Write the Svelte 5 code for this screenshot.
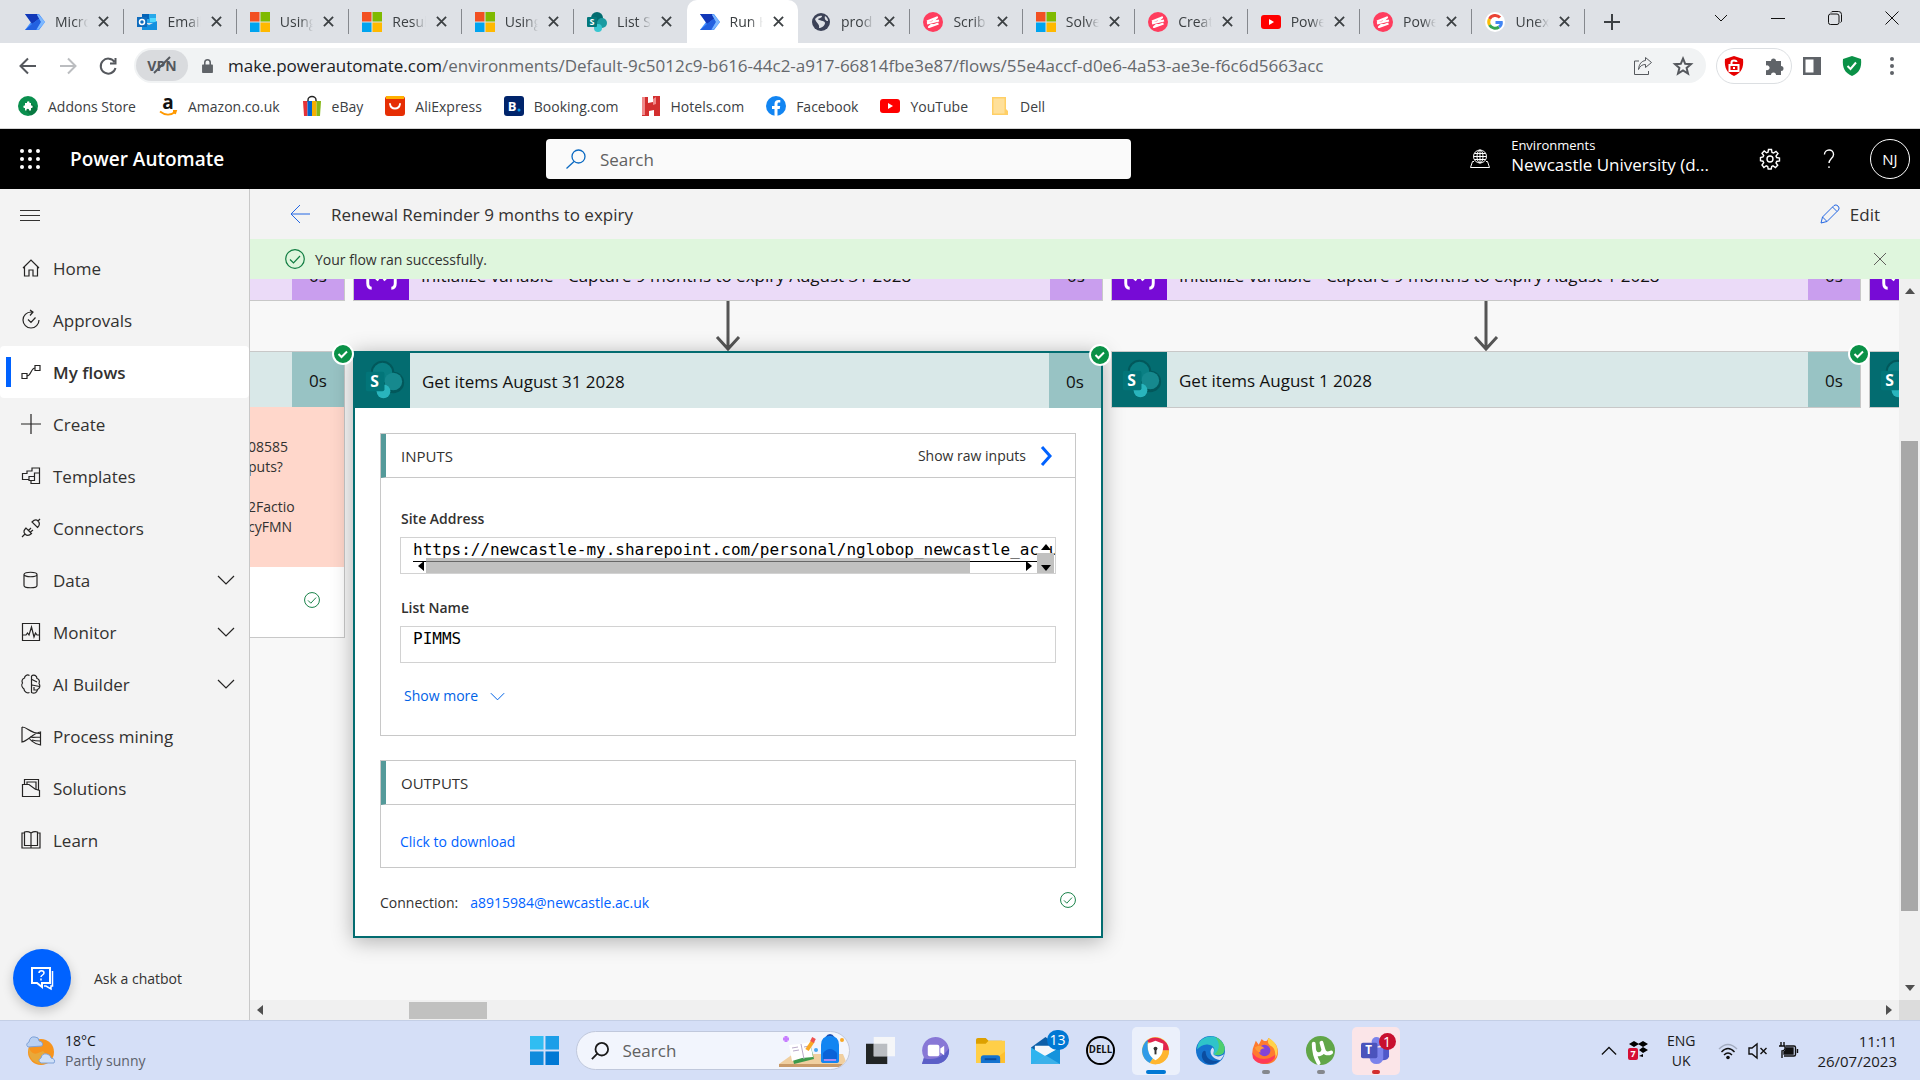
<script lang="ts">
	const tabs = [
		{ icon: 'flow', title: 'Micro' },
		{ icon: 'outlook', title: 'Email' },
		{ icon: 'microsoft', title: 'Using' },
		{ icon: 'microsoft', title: 'Resul' },
		{ icon: 'microsoft', title: 'Using' },
		{ icon: 'sharepoint', title: 'List S', plain: true },
		{ icon: 'flow', title: 'Run H', active: true },
		{ icon: 'globe', title: 'prod' },
		{ icon: 'scribe', title: 'Scrib' },
		{ icon: 'microsoft', title: 'Solve' },
		{ icon: 'scribe', title: 'Creat' },
		{ icon: 'youtube', title: 'Powe' },
		{ icon: 'scribe', title: 'Powe' },
		{ icon: 'google', title: 'Unex' }
	];

	const bookmarks = [
		{ icon: 'addons', title: 'Addons Store' },
		{ icon: 'amazon', title: 'Amazon.co.uk' },
		{ icon: 'ebay', title: 'eBay' },
		{ icon: 'ali', title: 'AliExpress' },
		{ icon: 'booking', title: 'Booking.com' },
		{ icon: 'hotels', title: 'Hotels.com' },
		{ icon: 'facebook', title: 'Facebook' },
		{ icon: 'youtube', title: 'YouTube' },
		{ icon: 'folder', title: 'Dell' }
	];

	const nav = [
		{ label: 'Home', d: 'M2 10 10 2l8 8M3.500 9v9h4.500v-6h4v6h4.500V9' },
		{ label: 'Approvals', d: 'M18 10a8 8 0 1 1-8-8h2M9 0l3 2-3 3.500M7 9.500l3 3 4.500-5' },
		{ label: 'My flows', d: 'M1 11.500h5v5H1zM14 3.500h5v5h-5zM6 14c4 0 4-8 8-8', active: true },
		{ label: 'Create', d: 'M10 0v20M0 10h20' },
		{ label: 'Templates', d: 'M8 13.500H1.500v-6H6V5h5V2h7.500v5M10 17.500v-3H8v-4h5.500V7h5v10.500zM10 14.500h3.500v-4' },
		{ label: 'Connectors', d: 'M1 19l3-3M4 16c-2-2-1-4 1-6l5.500 5.500c-2 2-4.500 2.500-6.500.5zM7.500 12.500 10 10M9.500 14 12 12M19 1l-2 2M17 3c2 2 1.500 4.500-.5 6.500L11 4c2-2 4-3 6-1z' },
		{ label: 'Data', d: 'M3 4.500C3 1.500 16 1.500 16 4.500S3 7.500 3 4.500v11c0 3 13 3 13 0v-11', more: true },
		{ label: 'Monitor', d: 'M1.500 1.500h17v17h-17zM2 13h3l1.500-2L8 13l2.500-8L13 15l1.500-4 1.500 2h3', more: true },
		{ label: 'AI Builder', d: 'M8.500 1.500C6 0 3.500 2 3.500 4 1 5 .5 7 1.500 9c-1.500 2-.5 4.500 1.500 6 0 3 3.500 4.500 5.500 3.500M10.500 2v16.500c3 1.500 5.500 0 6-3 2.500-1 3-4 1.500-6 1-2.500 0-4.500-2-5 0-3-3.500-4.500-5.500-2.500M11 5.500l5 2.500M11 11l7.500 1.500M13 13v3h4', more: true },
		{ label: 'Process mining', d: 'M1 1v15c6-1 11-9 18.500-10v13C12 18 8 12 8 12M1 1c6 0 7 6 18 6.500M9 11c3 1 6 0 10.500 0M11 14c3 1 5 1 8.500 1' },
		{ label: 'Solutions', d: 'M1.500 6.500v12h17v-6L14 11 8 6.500zM3.500 6V1.500h14v11M6 6V4h9v8' },
		{ label: 'Learn', d: 'M3.500 3H1v15h18V3h-2.500M3.500 2c3-1 5 0 6.500 1 1.500-1 3.500-2 6.500-1v13.500H3.500zM10 3v14.500' }
	];

	const columns = [
		{ variable: '', action: '' },
		{
			variable: 'Initialize variable - Capture 9 months to expiry August 31 2028',
			action: 'Get items August 31 2028',
			open: true
		},
		{
			variable: 'Initialize variable - Capture 9 months to expiry August 1 2028',
			action: 'Get items August 1 2028'
		},
		{ variable: '', action: '' }
	];

	const apps = [
		{ icon: 'taskview' },
		{ icon: 'chat' },
		{ icon: 'explorer' },
		{ icon: 'mail', badge: '13' },
		{ icon: 'dell' },
		{ icon: 'browser', state: 'current' },
		{ icon: 'edge' },
		{ icon: 'firefox', state: 'running' },
		{ icon: 'utorrent', state: 'running' },
		{ icon: 'teams', state: 'alert', badge: '1' }
	];
</script>

{#snippet siteIcon(name)}
	<svg class="site-icon" viewBox="0 0 20 20" aria-hidden="true">
		{#if name === 'flow'}
			<path fill="#3f8cff" d="M0 2h14l6 8-6 8H0l6-8z" />
			<path fill="#1238b8" d="M0 2h12l3 4-8 6z" />
			<path fill="#2361e0" d="M7 12 15 6l1 4-5 8H0z" />
			<path fill="#7db8ff" d="m13 2 7 8-7 8-1-1 4-7-4-7z" />
		{:else if name === 'outlook'}
			<path fill="#28a8ea" d="M5 2h14v9H5z" />
			<path fill="#0364b8" d="M5 2h7v5H5z" />
			<path fill="#50d9ff" d="M13 6h6v4h-6z" />
			<path fill="#1490df" d="m5 9 7 4 8-4v9H5z" />
			<path fill="#0f6cbd" d="M0 5h10v10H0z" />
			<circle cx="5" cy="10" r="2.500" fill="none" stroke="#fff" stroke-width="1.500" />
		{:else if name === 'microsoft'}
			<path fill="#f25022" d="M0 0h9.500v9.500H0z" />
			<path fill="#7fba00" d="M10.500 0H20v9.500h-9.500z" />
			<path fill="#00a4ef" d="M0 10.500h9.500V20H0z" />
			<path fill="#ffb900" d="M10.500 10.500H20V20h-9.500z" />
		{:else if name === 'sharepoint'}
			<circle cx="10" cy="6" r="6" fill="#036c70" />
			<circle cx="15" cy="11" r="5" fill="#1a9ba1" />
			<circle cx="11" cy="16" r="4" fill="#37c6d0" />
			<rect y="5" width="10" height="10" rx="1" fill="#03787c" />
			<text x="5" y="13" text-anchor="middle" class="mark small">S</text>
		{:else if name === 'globe'}
			<circle cx="10" cy="10" r="9" fill="#3c4257" />
			<path fill="#dee1e6" d="M4 7c2-3 6-4 7-3 0 2-3 2-4 3 0 2 7 1 7 4s-4 5-6 5c1-4-3-5-4-9zM14 4c2 1 3 3 3 5-2 0-4-2-3-5z" />
		{:else if name === 'scribe'}
			<circle cx="10" cy="10" r="10" fill="#ff3d5e" />
			<path fill="none" stroke="#fff" stroke-width="2.200" stroke-linejoin="round" d="M4 9.500 14 5.500 10 9M4 11.500 16 8.500M10 11.500 6 15l9.500-3.500" />
		{:else if name === 'youtube'}
			<rect y="3" width="20" height="14" rx="3" fill="#f00" />
			<path fill="#fff" d="m8 7 5 3-5 3z" />
		{:else if name === 'google'}
			<circle cx="10" cy="10" r="10" fill="#fff" />
			<g fill="none" stroke-width="3">
				<path stroke="#ea4335" d="M15 5.500A6.500 6.500 0 0 0 4.500 7" />
				<path stroke="#fbbc05" d="M4.500 7a6.500 6.500 0 0 0 0 6" />
				<path stroke="#34a853" d="M4.500 13a6.500 6.500 0 0 0 9.500 2" />
				<path stroke="#4285f4" d="M14 15c1.500-1 2.500-3 2.300-4.500H10.500" />
			</g>
		{:else if name === 'addons'}
			<circle cx="10" cy="10" r="10" fill="#0a8f4e" />
			<path fill="#066b39" d="m7 14 6-7 6.500 6A10 10 0 0 1 13 19.500z" opacity=".6" />
			<path fill="#fff" d="M7 7h2a1.300 1.300 0 1 1 2.500 0H13v2.500a1.300 1.300 0 1 1 0 2.500v2.500h-2a1.300 1.300 0 1 0-2.500 0H7V12a1.300 1.300 0 1 1 0-2.500z" />
		{:else if name === 'amazon'}
			<text x="10" y="13" text-anchor="middle" class="mark dark" font-size="19">a</text>
			<path fill="none" stroke="#f90" stroke-width="1.800" d="M2 15.500c5 4 11 4 15 .5M15 15h3l-1 3" />
		{:else if name === 'ebay'}
			<path fill="none" stroke="#222" stroke-width="1.400" d="M6 6V4a4 3.500 0 0 1 8 0v2" />
			<path fill="#e53238" d="M1 5h4.500v15H2z" />
			<path fill="#0064d2" d="M5.500 5H10v15H5.500z" />
			<path fill="#f5af02" d="M10 5h4.500v15H10z" />
			<path fill="#86b817" d="M14.500 5H19l-1 15h-3.500z" />
		{:else if name === 'ali'}
			<rect width="20" height="20" rx="3" fill="#e62e04" />
			<path fill="#ffb000" d="M1 0h18v3H1z" />
			<path fill="none" stroke="#fff" stroke-width="1.800" stroke-linecap="round" d="M5 8c1 6 9 6 10 0" />
		{:else if name === 'booking'}
			<rect width="20" height="20" rx="3" fill="#00246b" />
			<text x="8" y="15" text-anchor="middle" class="mark" font-size="13">B</text>
			<circle cx="15" cy="14" r="1.500" fill="#0a9ae8" />
		{:else if name === 'hotels'}
			<path fill="#d32f2f" d="M1 1h6v6l5-1V0h7v20h-6v-6l-5 1v5H1z" />
			<path fill="#f08a8a" d="M1 1h3v18H1zM12 3l3-2v7l-3 1z" />
		{:else if name === 'facebook'}
			<circle cx="10" cy="10" r="10" fill="#1285f2" />
			<path fill="#fff" d="M8.500 20v-7H6v-3h2.500V8c0-2.500 1.500-4 4-4h1.800v2.500H13c-1.200 0-1.500.700-1.500 1.500v2h2.700l-.500 3h-2.200v7z" />
		{:else if name === 'folder'}
			<path fill="#ffcf66" d="M2 1h14v12l2 2v4H2z" />
			<path fill="#ffe09a" d="M3.500 2.500h11v15h-11z" />
		{/if}
	</svg>
{/snippet}

{#snippet appIcon(name)}
	<svg class="app-icon" viewBox="0 0 30 30" aria-hidden="true">
		{#if name === 'taskview'}
			<path fill="#222525" d="M0 8h22v21H0z" />
			<path fill="#f5f6f8" d="M8 1h22v20H8z" />
			<path fill="#babdc2" d="M8 8h14v13H8z" />
		{:else if name === 'chat'}
			<path fill="#8878d6" d="M15 1a14 14 0 0 1 0 28H1l2-7A14 14 0 0 1 15 1z" />
			<path fill="#5b5fc7" d="M29 13A14 14 0 0 1 15 29H1l2-6c12 3 20-2 26-10z" />
			<rect x="7" y="9" width="12" height="12" rx="2" fill="#fff" />
			<path fill="#fff" d="m20 13 4-3v10l-4-3z" />
		{:else if name === 'explorer'}
			<path fill="#dda000" d="M0 4q0-2 2-2h8l3 3h14v7H0z" />
			<path fill="#ffcf48" d="M0 8h10l3-3h17v23H0z" />
			<path fill="#ffc02e" d="m14 28 16-12v12z" />
			<path fill="#1473cf" d="M5 28v-5q0-3 3-3h14q3 0 3 3v5z" />
			<path stroke="#0a4c9c" stroke-width="2" d="M9 24h12" />
		{:else if name === 'mail'}
			<path fill="#0d5fa8" d="M0 12 15 1l15 11v6H0z" />
			<path fill="#f4f7fb" d="M4 10h22v5l-11 9L4 15z" />
			<path fill="#2fb4ef" d="m0 12 15 9 15-9v17H0z" />
			<path fill="#1593dc" d="M0 29 30 12v17z" />
			<path fill="#5ccaf5" d="m0 29 15-9 15 9z" opacity=".55" />
		{:else if name === 'dell'}
			<circle cx="15" cy="15" r="14" fill="none" stroke="#000" stroke-width="2" />
			<text x="15" y="18" text-anchor="middle" class="mark dark" font-size="10">DELL</text>
		{:else if name === 'browser'}
			<circle cx="15" cy="15" r="14" fill="#fbd44c" />
			<path fill="#e2244f" d="M5 6a14 14 0 0 1 24 9h-8L15 8z" />
			<path fill="#2f9be8" d="M7 4a14 14 0 0 0 2 24l4-6-6-8z" />
			<path fill="#ffb52e" d="M29 15a14 14 0 0 1-20 13l5-6 7-7z" />
			<path fill="#fff" d="m15 5 8 3c0 8-1 13-8 17-7-4-8-9-8-17z" />
			<circle cx="15" cy="13" r="2" fill="#333" />
			<path stroke="#333" stroke-width="2" d="M15 13v6" />
		{:else if name === 'edge'}
			<circle cx="15" cy="15" r="15" fill="#1573cf" />
			<path fill="#2fc4c9" d="M2 9C6-1 22-3 28 8c4 8-1 12-6 12-3 0-5-1-4-3 3-4-1-8-5-8C8 8 4 11 1 14z" />
			<path fill="#4ecf6e" d="M20 1c9 4 12 12 8 17-3 2-7 2-9 1 6-5 6-12 1-18z" />
			<path fill="#d6dff6" d="M17 12c4 3-1 6 2 8 3 2 7 1 10-1-1 3-2 4-4 6-8-1-13-8-8-13z" />
			<path fill="#0b4da0" d="M10 16c0 8 7 11 15 9-7 6-17 6-19-4 0-4 2-7 4-5z" />
		{:else if name === 'firefox'}
			<path fill="#ff7a2d" d="M3 10 5 5l3 4 3-6c4 4 6 2 7-1 4 2 6 6 7 6 4 5 4 14-1 18-6 5-17 4-21-4-2-4-2-8 0-12z" />
			<path fill="#ff3b57" d="M1 16c3 8 15 11 25 3-3 11-18 13-24 4z" />
			<path fill="#ffd24a" d="M18 2c9 4 12 14 7 21 1-6-1-12-5-13-3-2-3-5-2-8z" />
			<circle cx="14" cy="15" r="6" fill="#8344d8" />
			<path fill="#ff9a37" d="M4 12c4-3 7-2 10 1-4 0-5 2-4 4-3 0-5-2-6-5z" />
		{:else if name === 'utorrent'}
			<circle cx="15" cy="15" r="15" fill="#61a648" />
			<path fill="none" stroke="#fff" stroke-width="4" stroke-linecap="round" d="M8 8c0 7 1 13 5 20M9 16c2 5 9 3 9-2l-2-7M18 14c1 4 4 5 8 3" />
		{:else if name === 'teams'}
			<circle cx="16" cy="6" r="5" fill="#7b83eb" />
			<circle cx="25" cy="8" r="4" fill="#5059c9" />
			<path fill="#5059c9" d="M20 12h9v9q-1 5-9 4z" />
			<path fill="#7b83eb" d="M9 12h14v11q-1 6-7 6t-7-6z" />
			<rect y="7" width="17" height="16" rx="2" fill="#4b53bc" />
			<text x="8" y="19" text-anchor="middle" class="mark" font-size="12">T</text>
		{/if}
	</svg>
{/snippet}

{#snippet sharePoint()}
	<svg class="card-icon" viewBox="0 0 56 56" aria-hidden="true">
		<path fill="#036c70" d="M0 0h56v56H0z" />
		<circle cx="28" cy="20" r="12" fill="#02585b" />
		<circle cx="39" cy="30" r="11" fill="#02585b" />
		<circle cx="28" cy="20" r="10" fill="#0a7f83" />
		<circle cx="39" cy="29" r="9" fill="#16898e" />
		<circle cx="29" cy="39" r="7" fill="#29b5bd" />
		<rect x="11" y="19" width="19" height="20" rx="2" fill="#027579" />
		<text x="20" y="35" text-anchor="middle" class="mark" font-size="16">S</text>
	</svg>
{/snippet}

{#snippet braces()}
	<svg class="card-icon" viewBox="0 0 56 56" aria-hidden="true">
		<path fill="#770bd6" d="M0 0h56v56H0z" />
		<path fill="none" stroke="#fff" stroke-width="3" d="M18 14q-4 0-4 5v5q0 4-3 4 3 0 3 4v5q0 5 4 5M38 14q4 0 4 5v5q0 4 3 4-3 0-3 4v5q0 5-4 5M23 21l9 13M32 21l-9 13" />
	</svg>
{/snippet}

{#snippet tick(size)}
	<svg class="tick {size}" viewBox="0 0 20 20" aria-hidden="true">
		<circle cx="10" cy="10" r="9.300" />
		<path d="m5 10.500 3.500 3.500L15 7" />
	</svg>
{/snippet}

{#snippet chevron()}
	<svg class="chevron" viewBox="0 0 18 18" aria-hidden="true"><path d="m1 5 8 8 8-8" /></svg>
{/snippet}

<div class="screen">
	<div class="tab-strip">
		<div class="tabs">
			{#each tabs as tab}
				<div class="tab" class:active={tab.active} class:plain={tab.plain}>
					{@render siteIcon(tab.icon)}
					<span class="tab-title">{tab.title}</span>
					<button class="tab-close" aria-label="Close tab">
						<svg viewBox="0 0 12 12"><path d="m1 1 10 10M11 1 1 11" /></svg>
					</button>
				</div>
			{/each}
		</div>
		<button class="new-tab" aria-label="New tab"><svg viewBox="0 0 16 16"><path d="M8 0v16M0 8h16" /></svg></button>
		<div class="window-controls">
			<button aria-label="Search tabs"><svg viewBox="0 0 14 14"><path d="m1 4 6 6 6-6" /></svg></button>
			<button aria-label="Minimise"><svg viewBox="0 0 14 14"><path d="M0 7.500h14" /></svg></button>
			<button aria-label="Restore"><svg viewBox="0 0 14 14"><rect x=".5" y="3" width="10.500" height="10.500" rx="2" /><path d="M3 1.500Q3.500.5 5 .5h5.500q3 0 3 3V10q0 1-1 1.500" /></svg></button>
			<button aria-label="Close window"><svg viewBox="0 0 14 14"><path d="m.5.5 13 13M13.500.5l-13 13" /></svg></button>
		</div>
	</div>

	<div class="toolbar">
		<button aria-label="Back"><svg viewBox="0 0 20 20"><path d="M18 10H3M10 2.500 2.500 10l7.500 7.500" /></svg></button>
		<button class="faded" aria-label="Forward"><svg viewBox="0 0 20 20"><path d="M2 10h15M10 2.500l7.500 7.500-7.500 7.500" /></svg></button>
		<button aria-label="Reload"><svg viewBox="0 0 20 20"><path d="M16.500 6A7.500 7.500 0 1 0 17.500 12M17.500 2v5.500H12" /></svg></button>
		<div class="address">
			<button class="vpn">VPN<svg viewBox="0 0 34 20" aria-hidden="true"><path d="m9 18 16-16" /></svg></button>
			<svg class="lock" viewBox="0 0 14 18" aria-hidden="true"><path fill="#5f6368" d="M1 7h12q1 0 1 1v9q0 1-1 1H1q-1 0-1-1V8q0-1 1-1z" /><path fill="none" stroke="#5f6368" stroke-width="2" d="M3.500 8V4.500a3.500 3.500 0 0 1 7 0V8" /></svg>
			<span class="url"><b>make.powerautomate.com</b>/environments/Default-9c5012c9-b616-44c2-a917-66814fbe3e87/flows/55e4accf-d0e6-4a53-ae3e-f6c6d5663acc</span>
			<button aria-label="Share"><svg viewBox="0 0 20 20"><path d="M6 5H1.500v13.500h14V15M12.500 1.500l6 5-6 5V8.500C9 8.500 7 10 5.500 13.500 6 8 8.500 5 12.500 4.500z" /></svg></button>
			<button aria-label="Bookmark"><svg viewBox="0 0 20 20"><path stroke-width="2" d="m10 2.500 2.200 5.300 5.800.400-4.400 3.700 1.400 5.600-5-3.100-5 3.100 1.400-5.600L2 8.200l5.800-.400z" /></svg></button>
		</div>
		<div class="extensions">
			<button aria-label="Lock extension"><svg viewBox="0 0 20 20"><path class="solid" fill="#e60000" d="m10 0 9 3c1 9-2 14-9 17C3 17 0 12 1 3z" /><path stroke="#fff" d="M5.500 9h9v6h-9zM7.500 9V6.500q0-2 2.500-2t2.500 1.500M10 11v2" /></svg></button>
			<button aria-label="Extensions"><svg viewBox="0 0 20 20"><path class="solid" fill="#5f6368" d="M2 5h5a2.500 2.500 0 1 1 5 0h5v5a2.500 2.500 0 1 1 0 5v4h-5a2.500 2.500 0 1 0-5 0H2v-5a2.500 2.500 0 1 0 0-4.500z" /></svg></button>
		</div>
		<button aria-label="Side panel"><svg viewBox="0 0 20 20"><path class="solid" fill="#5f6368" d="M1 1h18v18H1z" /><path class="solid" fill="#fff" d="M3.500 3.500h8v13h-8z" /></svg></button>
		<button aria-label="Protection"><svg viewBox="0 0 20 20"><path class="solid" fill="#0a9147" d="m10 0 9 3c1 9-2 14-9 17C3 17 0 12 1 3z" /><path stroke="#fff" stroke-width="2" d="m5.500 10 3 3L14 6.500" /></svg></button>
		<button aria-label="Menu"><svg viewBox="0 0 20 20"><g fill="#5f6368" stroke="none"><circle cx="10" cy="3" r="2" /><circle cx="10" cy="10" r="2" /><circle cx="10" cy="17" r="2" /></g></svg></button>
	</div>

	<div class="bookmarks">
		{#each bookmarks as bookmark}
			<a href="#{bookmark.icon}">{@render siteIcon(bookmark.icon)}{bookmark.title}</a>
		{/each}
	</div>

	<header class="app-bar">
		<div class="brand">
			<button aria-label="App launcher">
				<svg viewBox="0 0 20 20">
					{#each [2, 10, 18] as y}
						{#each [2, 10, 18] as x}<circle cx={x} cy={y} r="2" />{/each}
					{/each}
				</svg>
			</button>
			<strong>Power Automate</strong>
		</div>
		<label class="app-search">
			<svg viewBox="0 0 20 20" aria-hidden="true"><circle cx="12.500" cy="7.500" r="6.500" /><path d="M8 12.500.5 19.500" /></svg>
			<input type="text" placeholder="Search" />
		</label>
		<div class="app-tools">
			<svg class="env-icon" viewBox="0 0 20 20" aria-hidden="true"><circle cx="10" cy="7.500" r="6.500" /><ellipse cx="10" cy="7.500" rx="3" ry="6.500" /><path d="M3.500 7.500h13M4.500 4.500h11M4.500 10.500h11M10 1v13M4 12.500H2.500l-2 6h19l-2-6H16" /></svg>
			<div class="environment"><span>Environments</span><span class="env-name">Newcastle University (d...</span></div>
			<button class="settings" aria-label="Settings">
				<svg viewBox="0 0 20 20"><circle cx="10" cy="10" r="3" /><path d="M8.500.5h3l.5 3 1.500.5L16 2.300 18 4.500 16 7l.700 1.500 2.800.5v3l-2.800.5-.700 1.500 1.700 2.300-2.200 2.200-2.500-1.700-1.300.700-.500 2.500h-3l-.500-2.500-1.500-.700-2.300 1.700L2 16l1.700-2.300-.700-1.500-2.500-.500V8.500L3 8l.700-1.500L2 4.200 4.200 2l2.300 1.800L8 3.200z" /></svg>
			</button>
			<button class="help" aria-label="Help"><svg viewBox="0 0 14 22"><path d="M2 6c0-6 10-7 10 0 0 4-5 5-5 9.500M7 19v2" /></svg></button>
			<button class="avatar">NJ</button>
		</div>
	</header>

	<div class="workspace">
		<nav>
			<button class="menu" aria-label="Collapse menu"><svg viewBox="0 0 20 20"><path d="M0 4.500h20M0 9.500h20M0 14.500h20" /></svg></button>
			{#each nav as item}
				<a href="#{item.label}" class:active={item.active}>
					<svg class="nav-icon" viewBox="0 0 20 20" aria-hidden="true"><path d={item.d} /></svg>
					<span>{item.label}</span>
					{#if item.more}{@render chevron()}{/if}
				</a>
			{/each}
			<div class="chatbot">
				<button aria-label="Ask a chatbot"><svg viewBox="0 0 24 24"><path stroke-width="2" d="M2 2h18v15h-8v4l-5-4H2z" /><path d="M22.500 5v15H21v3l-5-3h-2M9 7c0-3 5-3 5 0 0 2-3 2-3 4M11 12.500v2" /></svg></button>
				<span>Ask a chatbot</span>
			</div>
		</nav>

		<main>
			<div class="flow-bar">
				<button class="back" aria-label="Back to flow"><svg viewBox="0 0 20 20"><path d="M20 10H1M10 1l-9 9 9 9" /></svg></button>
				<h1>Renewal Reminder 9 months to expiry</h1>
				<button class="edit"><svg viewBox="0 0 20 20" aria-hidden="true"><path d="m1 19 1.500-6L14 1.500q2-1.500 4 .5t.5 4L7 17.500zM12.500 3l4.500 4.500M2.500 13 7 17.500" /></svg>Edit</button>
			</div>
			<div class="notice">
				{@render tick('large')}
				<span>Your flow ran successfully.</span>
				<button aria-label="Dismiss"><svg viewBox="0 0 14 14"><path d="m1 1 12 12M13 1 1 13" /></svg></button>
			</div>

			<div class="canvas">
				<div class="flow">
					{#each columns as column, i}
						<div class="column">
							<div class="card variable">
								<div class="card-head">
									{@render braces()}
									<span class="card-title">{column.variable}</span>
									<span class="duration">0s</span>
								</div>
							</div>
							<svg class="arrow" viewBox="0 0 24 50" aria-hidden="true"><path d="M12 0v48M1 36l11 12 11-12" /></svg>
							<div class="card action" class:open={column.open}>
								<div class="card-head">
									{@render sharePoint()}
									<span class="card-title">{column.action}</span>
									<span class="duration">0s</span>
								</div>
								<svg class="badge" viewBox="0 0 22 22" aria-hidden="true"><circle cx="11" cy="11" r="10" /><path d="m6.500 11 3 3 5.500-5.500" /></svg>
								{#if i === 0}
									<div class="error">08585<br />puts?<br /><br />2Factio<br />cyFMN</div>
									<div class="error-foot">{@render tick('small')}</div>
								{/if}
								{#if column.open}
									<div class="details">
										<section>
											<div class="section-head">
												<h2>INPUTS</h2>
												<button class="raw">Show raw inputs<svg viewBox="0 0 12 20" aria-hidden="true"><path d="m2 1 8 9-8 9" /></svg></button>
											</div>
											<div class="inputs">
												<label for="site">Site Address</label>
												<div class="field">
													<input id="site" readonly value="https://newcastle-my.sharepoint.com/personal/nglobop_newcastle_ac_uk" />
													<div class="field-scroll">
														<svg viewBox="0 0 10 10" aria-hidden="true"><path d="M8 0v10L2 5z" /></svg>
														<span></span>
														<svg viewBox="0 0 10 10" aria-hidden="true"><path d="M2 0v10l6-5z" /></svg>
													</div>
													<div class="field-spin">
														<svg viewBox="0 0 10 10" aria-hidden="true"><path d="M0 8h10L5 2z" /></svg>
														<svg viewBox="0 0 10 10" aria-hidden="true"><path d="M0 2h10L5 8z" /></svg>
													</div>
												</div>
												<label for="list">List Name</label>
												<div class="field"><input id="list" readonly value="PIMMS" /></div>
												<button class="show-more">Show more {@render chevron()}</button>
											</div>
										</section>
										<section>
											<div class="section-head"><h2>OUTPUTS</h2></div>
											<div class="outputs"><a href="#download">Click to download</a></div>
										</section>
										<div class="connection">
											<span>Connection:</span>
											<a href="#connection">a8915984@newcastle.ac.uk</a>
											{@render tick('small')}
										</div>
									</div>
								{/if}
							</div>
						</div>
					{/each}
				</div>
			</div>
			<div class="scroll-y">
				<svg viewBox="0 0 10 10" aria-hidden="true"><path d="M0 8h10L5 2z" /></svg>
				<span></span>
				<svg viewBox="0 0 10 10" aria-hidden="true"><path d="M0 2h10L5 8z" /></svg>
			</div>
			<div class="scroll-x">
				<svg viewBox="0 0 10 10" aria-hidden="true"><path d="M8 0v10L2 5z" /></svg>
				<span></span>
				<svg viewBox="0 0 10 10" aria-hidden="true"><path d="M2 0v10l6-5z" /></svg>
			</div>
			<div class="corner"></div>
		</main>
	</div>

	<footer class="taskbar">
		<div class="weather">
			<svg viewBox="0 0 30 30" aria-hidden="true">
				<circle cx="15" cy="16" r="13" fill="#f7941d" />
				<path fill="#e9a93a" d="M3 12c4 8 7 6 14 3l8 9a13 13 0 0 1-22-12z" />
				<path fill="#b9d0f2" stroke="#7fa2d8" d="M2 11q-3-3 1-5 1-6 6-5 4 0 4 4 5 1 3 5z" />
				<path fill="#cfe0f8" stroke="#7fa2d8" d="M15 27q-4-3 0-5 1-5 6-4 4 1 4 4 5 1 3 5z" />
			</svg>
			<div><span>18°C</span><span class="muted">Partly sunny</span></div>
		</div>
		<div class="dock">
			<button class="tile" aria-label="Start">
				<svg class="app-icon" viewBox="0 0 30 30"><path fill="#30bdf2" d="M0 0h14v14H0z" /><path fill="#1c9ee8" d="M16 0h14v14H16z" /><path fill="#108bdc" d="M0 16h14v14H0z" /><path fill="#0078d4" d="M16 16h14v14H16z" /></svg>
			</button>
			<label class="task-search">
				<svg class="lens" viewBox="0 0 20 20" aria-hidden="true"><circle cx="12" cy="8" r="7" /><path d="m7 13-6 6" /></svg>
				<input type="text" placeholder="Search" />
				<svg class="art" viewBox="0 0 70 36" aria-hidden="true">
					<path fill="#f0cfa0" d="M0 31 14 21h50l4 10z" />
					<path fill="#c99a68" d="M0 31h66l-4 3H0z" />
					<path fill="#3d9a4b" d="m11 14 20-4 4 16-20 5z" />
					<path fill="#fff" d="m10 12 11-1 10-2 3 15-11 1-10 3z" />
					<path stroke="#b9a9c9" stroke-width="1" d="m22 11 3 15M13 15l6-1M14 18l6-1M25 14l5-1" />
					<path stroke="#f9a825" stroke-width="4" d="m28 17 6-9" />
					<path stroke="#ef5350" stroke-width="4" d="m33 9 2-4" />
					<path fill="none" stroke="#1a4fb0" stroke-width="2" d="M47 5q4-6 8 0" />
					<path fill="#1385f2" d="M42 28V12q0-9 9-9t9 9v16q0 2-3 2H45q-3 0-3-2z" />
					<path fill="#0a63d8" d="M44 20q7-8 14 0v6H44z" />
					<path stroke="#d98cf0" stroke-width="1.500" d="M45 27h12" />
					<path stroke="#c77dff" stroke-width="3" d="M7 3v6M4 6h6" />
					<circle cx="37" cy="17" r="2" fill="#4aa8f0" />
					<circle cx="63" cy="7" r="2" fill="#f9a825" />
				</svg>
			</label>
			{#each apps as app}
				<button class="tile {app.state ?? ''}" aria-label={app.icon}>
					{@render appIcon(app.icon)}
					{#if app.badge}<span class="count">{app.badge}</span>{/if}
				</button>
			{/each}
		</div>
		<div class="tray">
			<svg class="up" viewBox="0 0 18 18" aria-hidden="true"><path d="m1 13 8-8 8 8" /></svg>
			<svg class="dropbox" viewBox="0 0 20 20" aria-hidden="true">
				<path fill="#000" d="m6 0 5 3-5 3-5-3zM15 0l5 3-5 3-5-3zM15 6l5 3-5 3-4-3zM11 15l4-2v3z" />
				<rect y="7" width="10" height="12" rx="2" fill="#d50f35" />
				<text x="5" y="16" text-anchor="middle" class="mark small">7</text>
			</svg>
			<span class="lang">ENG<br />UK</span>
			<svg class="wifi" viewBox="0 0 20 20" aria-hidden="true"><path stroke="#a3acc0" d="M1 8q9-9 18 0" /><path d="M3.500 11q6.500-7 13 0M6 14q4-4 8 0" /><circle cx="10" cy="16.500" r="1.800" fill="#111" stroke="none" /></svg>
			<svg class="sound" viewBox="0 0 20 20" aria-hidden="true"><path d="M1 7h3l5-4v14l-5-4H1zM12.500 7l6 6M18.500 7l-6 6" /></svg>
			<svg class="battery" viewBox="0 0 20 20" aria-hidden="true"><path d="M3 1v4M6 1v4M1 5h6v3q-1 2-3 2v7M8 5h8q1.500 0 1.500 1.500v7q0 1.500-1.500 1.500H6M19.500 8v4" /><path fill="#111" d="M8 8q0 2-2 3v2h9V7H8z" /></svg>
			<span class="clock">11:11<br />26/07/2023</span>
		</div>
	</footer>
</div>

<style>
	:global(body) {
		background: #f3f3f3;
	}

	.screen {
		display: flex;
		flex-direction: column;
		height: 100vh;
		overflow: hidden;
		font-family: 'Open Sans', sans-serif;
		font-size: 16px;
		color: #323130;
	}

	button,
	input {
		padding: 0;
		border: 0;
		background: none;
		font: inherit;
		color: inherit;
	}

	a {
		color: inherit;
		text-decoration: none;
	}

	svg {
		display: block;
		flex: none;
		width: 20px;
		height: 20px;
		overflow: visible;
	}

	button svg {
		fill: none;
		stroke: currentColor;
	}

	.mark {
		font-family: 'Open Sans', sans-serif;
		font-weight: 700;
		fill: #fff;
		stroke: none;
	}

	.mark.dark {
		fill: #111;
	}

	.small {
		font-size: 9px;
	}

	/* browser chrome */
	.tab-strip {
		display: flex;
		flex: none;
		height: 43px;
		padding-left: 12px;
		background: #dee1e6;
		color: #3c4043;
	}

	.tabs {
		display: flex;
		flex: 0 1 1573px;
		min-width: 0;
	}

	.tab {
		display: flex;
		flex: 1;
		align-items: center;
		min-width: 0;
		margin: 9px 0;
		padding: 0 14px 0 13px;
		border-right: 1px solid #85888d;
		font-size: 14px;
	}

	.tab.plain {
		border-color: transparent;
	}

	.tab.active {
		margin: 0;
		border: 0;
		border-radius: 10px 10px 0 0;
		background: #fff;
	}

	.tab-title {
		flex: 1;
		overflow: hidden;
		margin: 0 10px;
		white-space: nowrap;
		mask-image: linear-gradient(90deg, #000 60%, transparent);
	}

	.tab-close svg {
		width: 11px;
		height: 11px;
		stroke-width: 2;
	}

	.new-tab {
		width: 54px;
	}

	.new-tab svg {
		width: 16px;
		height: 16px;
		margin: auto;
		stroke-width: 2;
	}

	.window-controls {
		display: flex;
		height: 36px;
		margin-left: auto;
		color: #111;
	}

	.window-controls button {
		width: 57px;
	}

	.window-controls svg {
		width: 14px;
		height: 14px;
		margin: auto;
	}

	.toolbar {
		display: flex;
		flex: none;
		align-items: center;
		gap: 20px;
		height: 45px;
		padding: 0 18px;
		background: #fff;
		color: #55585d;
	}

	.toolbar button svg {
		stroke-width: 2;
	}

	.toolbar button .solid {
		stroke: none;
	}

	.toolbar .faded {
		color: #bbbdc0;
	}

	.address {
		display: flex;
		flex: 1;
		align-items: center;
		min-width: 0;
		height: 35px;
		margin: 0 -10px 0 -4px;
		padding: 0 13px 0 2px;
		border-radius: 18px;
		background: #f1f3f4;
	}

	.address button svg {
		margin-left: 20px;
		stroke-width: 1;
	}

	.address .vpn {
		position: relative;
		width: 52px;
		height: 31px;
		border-radius: 16px;
		background: #d9dbde;
		font-size: 14px;
		font-weight: 700;
	}

	.address .vpn svg {
		position: absolute;
		inset: 5px 9px;
		width: 34px;
		margin: 0;
		stroke-width: 2;
	}

	.lock {
		width: 11px;
		height: 14px;
		margin: 0 15px 0 14px;
	}

	.url {
		flex: 1;
		overflow: hidden;
		font-size: 17px;
		white-space: nowrap;
		color: #65686c;
	}

	.url b {
		font-weight: 400;
		color: #202124;
	}

	.extensions {
		display: flex;
		gap: 20px;
		margin-right: -10px;
		padding: 7px;
		border: 1px solid #dcdfe2;
		border-radius: 18px;
	}

	.bookmarks {
		display: flex;
		flex: none;
		align-items: center;
		gap: 22px;
		height: 36px;
		padding: 0 18px 4px;
		border-bottom: 1px solid #d5d5d5;
		background: #fff;
		font-size: 14px;
		color: #3c4043;
	}

	.bookmarks a {
		display: flex;
		align-items: center;
		gap: 10px;
	}

	/* product header */
	.app-bar {
		display: grid;
		grid-template-columns: 546px minmax(200px, 585px) 1fr;
		flex: none;
		align-items: center;
		height: 60px;
		background: #000;
		color: #fff;
	}

	.brand {
		display: flex;
		align-items: center;
		gap: 30px;
		padding-left: 20px;
		font-size: 19px;
	}

	.brand strong {
		font-weight: 600;
	}

	.brand svg {
		fill: #fff;
		stroke: none;
	}

	.app-search {
		display: flex;
		align-items: center;
		gap: 14px;
		height: 40px;
		padding: 0 20px;
		border-radius: 4px;
		background: #fafafa;
		font-size: 17px;
	}

	.app-search svg {
		fill: none;
		stroke: #0b6ac2;
		stroke-width: 1.300;
	}

	input::placeholder {
		color: #616161;
		opacity: 1;
	}

	.app-tools {
		display: flex;
		align-items: center;
		justify-content: flex-end;
		padding-right: 10px;
	}

	.env-icon {
		fill: none;
		stroke: #fff;
	}

	.environment {
		display: flex;
		flex-direction: column;
		margin: 0 51px 0 21px;
		padding-bottom: 9px;
		font-size: 13px;
		line-height: 19px;
	}

	.env-name {
		font-size: 17px;
	}

	.help {
		margin: 0 34px 0 42px;
	}

	.help svg {
		width: 14px;
		stroke-width: 1.500;
	}

	.settings svg {
		stroke-width: 1.400;
	}

	.avatar {
		width: 40px;
		height: 40px;
		border: 1px solid #fff;
		border-radius: 50%;
		font-size: 15px;
	}

	/* navigation */
	.workspace {
		display: flex;
		flex: 1;
		min-height: 0;
	}

	nav {
		display: flex;
		flex: none;
		flex-direction: column;
		width: 249px;
		border-right: 1px solid #c8c8c8;
		background: #f3f3f3;
		font-size: 17px;
	}

	.menu {
		height: 53px;
		padding-left: 20px;
	}

	nav a {
		display: flex;
		align-items: center;
		gap: 12px;
		height: 52px;
		padding: 0 14px 0 21px;
	}

	nav a .chevron {
		margin-left: auto;
	}

	nav a.active {
		border-radius: 4px;
		background: linear-gradient(#0062ff, #0062ff) 6px 50% / 5px 30px no-repeat #fff;
		font-weight: 600;
	}

	.nav-icon,
	.chevron {
		fill: none;
		stroke: #252423;
		stroke-width: 1.200;
	}

	.chevron {
		width: 18px;
		height: 18px;
	}

	.chatbot {
		display: flex;
		align-items: center;
		gap: 23px;
		margin: auto 0 13px 13px;
		font-size: 14px;
	}

	.chatbot button {
		width: 58px;
		height: 58px;
		border-radius: 50%;
		background: #0062ff;
		box-shadow: 0 4px 12px rgba(0, 0, 0, 0.2);
		color: #fff;
	}

	.chatbot svg {
		width: 24px;
		height: 24px;
		margin: auto;
		stroke-width: 1.500;
	}

	/* flow run */
	main {
		display: grid;
		grid-template: 50px 40px 1fr 20px / 1fr 21px;
		flex: 1;
		min-width: 0;
	}

	.flow-bar,
	.notice {
		display: flex;
		grid-column: 1 / 3;
		align-items: center;
	}

	.flow-bar {
		padding: 0 40px;
		background: #f3f3f3;
	}

	.back {
		margin-right: 21px;
		color: #2266e3;
	}

	h1 {
		margin: 0;
		font-size: 17px;
		font-weight: 400;
	}

	.edit {
		display: flex;
		align-items: center;
		gap: 10px;
		margin-left: auto;
		font-size: 17px;
	}

	.edit svg {
		stroke: #2266e3;
	}

	.notice {
		gap: 10px;
		padding: 0 33px 0 35px;
		background: #dff6dd;
		font-size: 14px;
	}

	.notice button {
		margin-left: auto;
		color: #605e5c;
	}

	.notice button svg {
		width: 14px;
		height: 14px;
	}

	.tick {
		fill: none;
		stroke: #107c41;
		stroke-width: 1.200;
	}

	.tick.small {
		width: 16px;
		height: 16px;
	}

	.canvas {
		min-height: 0;
		overflow: hidden;
		background: #f8f8f8;
	}

	.flow {
		display: flex;
		gap: 8px;
		margin: -33px 0 0 -655px;
	}

	.column {
		display: flex;
		flex: 0 0 750px;
		flex-direction: column;
		align-items: center;
	}

	.card {
		position: relative;
		box-sizing: border-box;
		width: 100%;
		border: 1px solid #c8c8c8;
		background: #fff;
	}

	.card.open {
		border: 2px solid #036c70;
		box-shadow: 0 3px 20px rgba(0, 0, 0, 0.3);
	}

	.card-head {
		display: flex;
		height: 55px;
		overflow: hidden;
		background: #d9e8e8;
		font-size: 17px;
		line-height: 57px;
		color: #111;
	}

	.card-icon {
		width: 55px;
		height: 55px;
	}

	.card-title {
		flex: 1;
		padding-left: 12px;
	}

	.duration {
		width: 52px;
		background: #98c3c4;
		text-align: center;
	}

	.variable .card-head {
		height: 53px;
		background: #ebdbf8;
	}

	.variable .duration {
		background: #c99eee;
	}

	.arrow {
		width: 24px;
		height: 50px;
		fill: none;
		stroke: #555;
		stroke-width: 3;
	}

	.badge {
		position: absolute;
		z-index: 1;
		top: -9px;
		right: -10px;
		width: 22px;
		height: 22px;
		fill: #0a9147;
		stroke: #fff;
		stroke-width: 2;
	}

	.error {
		box-sizing: border-box;
		height: 160px;
		padding: 30px 0 0 652px;
		background: #ffd7cb;
		font-size: 14px;
		line-height: 20px;
	}

	.error-foot {
		display: flex;
		justify-content: flex-end;
		padding: 25px 24px 29px;
	}

	.details {
		padding: 25px 25px 23px;
		font-size: 14px;
	}

	section {
		margin-bottom: 24px;
		border: 1px solid #c8c8c8;
	}

	.section-head {
		display: flex;
		align-items: center;
		height: 43px;
		padding: 0 23px 0 15px;
		border-bottom: 1px solid #c8c8c8;
		border-left: 5px solid #549a9a;
	}

	h2 {
		margin: 0;
		font-size: 15px;
		font-weight: 500;
		line-height: 20px;
	}

	.raw,
	.show-more {
		display: flex;
		align-items: center;
	}

	.raw {
		gap: 14px;
		margin-left: auto;
	}

	.raw svg {
		width: 12px;
		stroke: #0062ff;
		stroke-width: 3;
	}

	.inputs {
		padding: 30px 19px 29px;
	}

	.inputs label {
		display: block;
		padding: 0 1px 7px;
		font-weight: 600;
		line-height: 22px;
	}

	.field {
		position: relative;
		box-sizing: border-box;
		height: 37px;
		margin-bottom: 23px;
		padding-left: 12px;
		border: 1px solid #d2d2d2;
	}

	.field input {
		display: block;
		width: 100%;
		height: 23px;
		font-family: 'DejaVu Sans Mono', monospace;
		font-size: 16px;
		color: #000;
	}

	.field-scroll,
	.field-spin {
		position: absolute;
		right: 1px;
		bottom: 0;
	}

	.field-scroll {
		display: flex;
		align-items: center;
		left: 12px;
		height: 15px;
		padding: 0 20px 0 3px;
		background: linear-gradient(#000, #000) 0 3px / 100% 1px no-repeat;
	}

	.field-scroll span {
		width: 88%;
		height: 15px;
		margin-right: auto;
		background: rgba(160, 160, 158, 0.65);
	}

	.field-spin {
		display: flex;
		flex-direction: column;
		align-items: center;
		justify-content: space-between;
		width: 17px;
		height: 31px;
		background: linear-gradient(transparent 35%, #c1c1c0 35%);
	}

	.field svg {
		width: 10px;
		height: 10px;
	}

	.show-more {
		gap: 12px;
		padding: 0 4px;
		color: #0062e6;
		line-height: 20px;
	}

	.show-more .chevron {
		width: 15px;
		height: 15px;
		stroke: #0062e6;
	}

	.outputs {
		padding: 27px 19px 15px;
		line-height: 20px;
	}

	.outputs a,
	.connection a {
		color: #0062ff;
	}

	.connection {
		display: flex;
		gap: 12px;
		line-height: 21px;
	}

	.connection .tick {
		margin-left: auto;
	}

	.scroll-y,
	.scroll-x {
		display: grid;
		align-items: center;
		justify-items: center;
		background: #f0f0f0;
	}

	.scroll-y {
		grid-template-rows: 24px 138fr 470fr 65fr 24px;
	}

	.scroll-x {
		grid-template-columns: 20px 139fr 78fr 1392fr 20px;
	}

	.scroll-y span {
		grid-row: 3;
		width: 17px;
		height: 100%;
		background: #a8a8a8;
	}

	.scroll-x span {
		grid-column: 3;
		width: 100%;
		height: 17px;
		background: #c1c1c0;
	}

	.scroll-y svg,
	.scroll-x svg {
		width: 10px;
		height: 10px;
		fill: #505050;
	}

	.scroll-y svg:last-child {
		grid-row: 5;
	}

	.scroll-x svg:last-child {
		grid-column: 5;
	}

	.corner {
		background: #dcdcdc;
	}

	/* desktop taskbar */
	.taskbar {
		display: grid;
		grid-template-columns: 1fr auto 1fr;
		flex: none;
		align-items: center;
		box-sizing: border-box;
		height: 60px;
		border-top: 1px solid #c4cfe6;
		background: #d5dff7;
		font-size: 14px;
		line-height: 20px;
		color: #1b1b1b;
	}

	.weather {
		display: flex;
		align-items: center;
		gap: 9px;
		padding-left: 26px;
	}

	.weather svg {
		width: 30px;
		height: 30px;
	}

	.weather span {
		display: block;
	}

	.muted {
		color: #5c616b;
	}

	.dock {
		display: flex;
		align-items: center;
		gap: 7px;
	}

	.tile {
		position: relative;
		width: 48px;
		height: 48px;
		border-radius: 5px;
	}

	.app-icon {
		width: 29px;
		height: 29px;
		margin: auto;
		stroke: none;
	}

	.tile.current {
		background: #ebf0fb;
	}

	.tile.alert {
		background: #fbe5e8;
	}

	.tile.current::after,
	.tile.running::after,
	.tile.alert::after {
		content: '';
		position: absolute;
		bottom: 1px;
		left: calc(50% - 4px);
		width: 8px;
		height: 4px;
		border-radius: 2px;
		background: #85888d;
	}

	.tile.current::after {
		left: calc(50% - 10px);
		width: 20px;
		background: #0078d4;
	}

	.tile.alert::after {
		background: #d32f2f;
	}

	.count {
		position: absolute;
		top: 3px;
		right: 1px;
		width: 22px;
		border-radius: 10px;
		background: #0078d4;
		font-size: 14px;
		line-height: 20px;
		color: #fff;
	}

	.alert .count {
		top: 6px;
		right: 4px;
		width: 17px;
		background: #c8102e;
		line-height: 17px;
	}

	.task-search {
		display: flex;
		align-items: center;
		gap: 14px;
		box-sizing: border-box;
		width: 274px;
		height: 39px;
		padding-left: 14px;
		overflow: hidden;
		border: 1px solid #c0c8dc;
		border-radius: 20px;
		background: #f2f5fd;
		font-size: 17px;
	}

	.task-search input {
		flex: 1;
		min-width: 0;
	}

	.lens {
		width: 18px;
		height: 18px;
		fill: none;
		stroke: #1b1b1b;
		stroke-width: 2;
	}

	.art {
		width: 70px;
		height: 36px;
	}

	.tray {
		display: flex;
		align-items: center;
		justify-content: flex-end;
		padding-right: 23px;
		text-align: center;
	}

	.tray svg {
		fill: none;
		stroke: #111;
		stroke-width: 1.400;
	}

	.tray .dropbox {
		margin: 0 19px 0 11px;
		stroke: none;
	}

	.tray .up {
		width: 16px;
	}

	.wifi {
		margin-left: 23px;
	}

	.sound {
		margin: 0 10px;
	}

	.clock {
		margin-left: 19px;
		font-size: 15px;
		text-align: right;
	}
</style>
